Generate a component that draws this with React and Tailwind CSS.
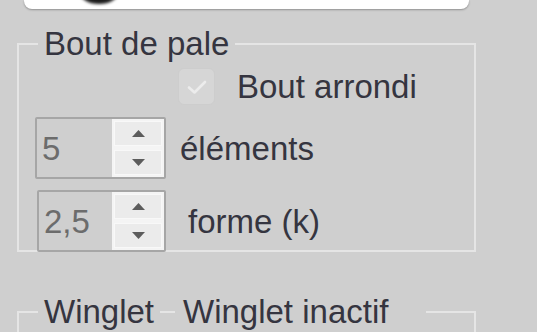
import React from 'react';

const font = { fontFamily: '"Liberation Sans", Arial, sans-serif' };

const SpinArrow = ({ up }) => (
  <svg width="13" height="7" viewBox="0 0 13 7">
    <polygon points={up ? '6.5,0 13,7 0,7' : '0,0 13,0 6.5,7'} fill="#5c5c5c" />
  </svg>
);

const Spinner = ({ value, className }) => (
  <div className={`flex h-[62px] border-2 border-[#a6a6a6] rounded-[2px] ${className}`}>
    <div className="flex flex-1 items-center pl-[5px] text-[33px] leading-[33px] text-[#6c6c6c]">{value}</div>
    <div className="flex w-[52px] flex-col gap-[4px] bg-[#f4f4f4] p-[2px]">
      <div className="flex flex-1 items-center justify-center border border-[#f8f8f8] bg-[#ebebeb]">
        <SpinArrow up />
      </div>
      <div className="flex flex-1 items-center justify-center border border-[#f8f8f8] bg-[#ebebeb]">
        <SpinArrow />
      </div>
    </div>
  </div>
);

export default function App() {
  return (
    <div className="h-[332px] w-[537px] overflow-hidden bg-[#cfcfcf] text-[#353540]" style={font}>
      {/* top edit box, cut by the window edge */}
      <div className="relative ml-[24px] h-[9px] w-[445px] overflow-hidden rounded-b-[8px] bg-white shadow-[0_1px_2px_rgba(0,0,0,0.3)]">
        <div className="absolute left-[56px] top-[-18px] h-[22px] w-[38px] rounded-[50%] bg-[#1a1a1a] blur-[1.5px]" />
      </div>

      {/* Bout de pale */}
      <fieldset className="ml-[17px] mt-[18px] h-[225px] w-[459px] border-2 border-[#e5e5e5] p-0">
        <legend className="ml-[19px] px-[6px] text-[33px] leading-[33px]">Bout de pale</legend>

        <div className="mt-[8px] flex items-center">
          <div className="ml-[159px] flex h-[37px] w-[37px] items-center justify-center rounded-[6px] border border-[#cdcdcd] bg-[#d6d6d6]">
            <svg width="22" height="16" viewBox="0 0 22 16">
              <path d="M3 8.5 L8.5 13.5 L19 3" fill="none" stroke="#ececec" strokeWidth="2.6" strokeLinecap="round" strokeLinejoin="round" />
            </svg>
          </div>
          <span className="ml-[22px] text-[33px] leading-[33px]">Bout arrondi</span>
        </div>

        <div className="mt-[12px] flex items-center">
          <Spinner value="5" className="ml-[16px] w-[131px]" />
          <span className="ml-[14px] text-[33px] leading-[33px]">éléments</span>
        </div>

        <div className="mt-[11px] flex items-center">
          <Spinner value="2,5" className="ml-[18px] w-[129px]" />
          <span className="ml-[22px] text-[33px] leading-[33px]">forme (k)</span>
        </div>
      </fieldset>

      {/* Winglet */}
      <div className="relative ml-[17px] mt-[43px] w-[459px]">
        <fieldset className="h-[100px] w-[459px] border-2 border-[#e5e5e5] p-0">
          <legend className="ml-[19px] px-[6px] text-[33px] leading-[33px]">Winglet</legend>
        </fieldset>
        <div className="absolute left-[158px] top-0 h-[33px] w-[251px] bg-[#cfcfcf] pl-[8px] text-[33px] leading-[33px]">
          Winglet inactif
        </div>
      </div>
    </div>
  );
}
